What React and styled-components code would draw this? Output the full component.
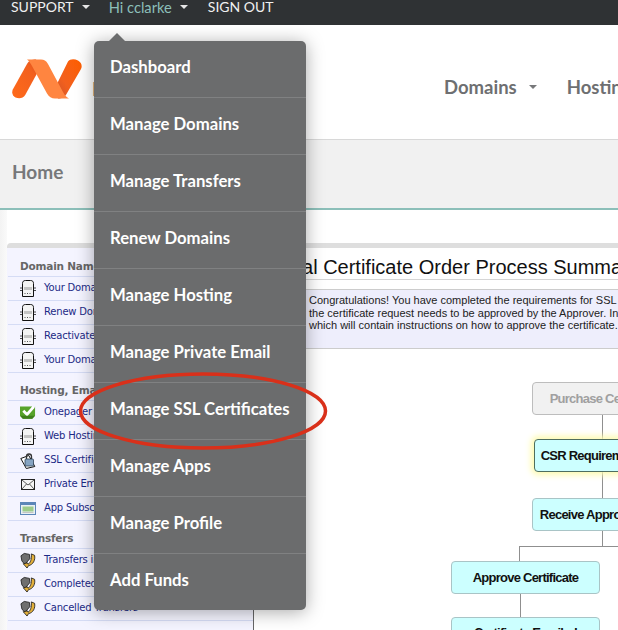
import React from 'react';
import styled, { createGlobalStyle } from 'styled-components';

const GlobalStyle = createGlobalStyle`
  html, body {
    margin: 0;
    padding: 0;
    background: #fff;
    overflow: hidden;
  }
`;

const menuItems = [
  'Dashboard',
  'Manage Domains',
  'Manage Transfers',
  'Renew Domains',
  'Manage Hosting',
  'Manage Private Email',
  'Manage SSL Certificates',
  'Manage Apps',
  'Manage Profile',
  'Add Funds',
];

const sideGroups = [
  {
    title: 'Domain Name Management',
    rows: [
      ['server', 'Your Domain Names'],
      ['server', 'Renew Domain Names'],
      ['server', 'Reactivate Domains'],
      ['server', 'Your Domain Alerts'],
    ],
  },
  {
    title: 'Hosting, Email & SSL',
    rows: [
      ['check', 'Onepager Sites'],
      ['server', 'Web Hosting List'],
      ['lock', 'SSL Certificates'],
      ['mail', 'Private Email'],
      ['app', 'App Subscriptions'],
    ],
  },
  {
    title: 'Transfers',
    rows: [
      ['transfer', 'Transfers in Progress'],
      ['transfer', 'Completed Transfers'],
      ['transfer', 'Cancelled Transfers'],
    ],
  },
];

const nodes = [
  { x: 278, y: 33, w: 146, h: 33, kind: 'muted', text: 'Purchase Certificate' },
  { x: 280, y: 90, w: 142, h: 33, kind: 'active', text: 'CSR Requirements Met' },
  { x: 278, y: 149, w: 146, h: 33, kind: 'normal', text: 'Receive Approval Email' },
  { x: 197, y: 212, w: 149, h: 33, kind: 'normal', text: 'Approve Certificate' },
  { x: 197, y: 268, w: 149, h: 30, kind: 'normal', text: 'Certificate Emailed' },
];

const lines = [
  { x: 348, y: 66, w: 1, h: 24 },
  { x: 348, y: 123, w: 1, h: 26 },
  { x: 348, y: 182, w: 1, h: 16 },
  { x: 265, y: 197, w: 120, h: 1 },
  { x: 265, y: 197, w: 1, h: 15 },
  { x: 266, y: 245, w: 1, h: 24 },
];

const ServerIcon = () => (
  <svg width="16" height="17" viewBox="0 0 16 17">
    <path d="M0 8h2M14 8h2M0 10.500h2M14 10.500h2" stroke="#222" strokeWidth="0.8" />
    <path d="M2.500 3.500c0-2 1-3 3-3h5c2 0 3 1 3 3v13h-11z" fill="#f4f4f4" stroke="#111" strokeWidth="1" />
    <rect x="4" y="7" width="8" height="3" fill="#c4c4c4" />
    <path d="M4.500 13.500h1M7 13.500h1M9.500 13.500h1" stroke="#555" strokeWidth="1" />
  </svg>
);

const CheckIcon = () => (
  <svg width="17" height="16" viewBox="0 0 17 16">
    <path d="M0 1h13l-1 2 3 0 1-2v10l-3 3H3l-3-3z" fill="#57a32a" />
    <path d="M3.500 5.500l4 4 7-8" fill="none" stroke="#fff" strokeWidth="3" />
    <path d="M0 11l3 3h10l3-3z" fill="#3f7f1c" />
  </svg>
);

const LockIcon = () => (
  <svg width="16" height="16" viewBox="0 0 16 16">
    <path d="M0.800 5.500l8-3 6 11-8.500 2z" fill="#fff" stroke="#111" strokeWidth="1" />
    <path d="M6.500 6V3.500a2.500 2.500 0 0 1 5 0V6" fill="none" stroke="#333" strokeWidth="1.300" />
    <rect x="5" y="6" width="8.500" height="7" rx="1" fill="#86a4c2" stroke="#2e4257" strokeWidth="0.8" />
  </svg>
);

const MailIcon = () => (
  <svg width="14" height="11" viewBox="0 0 14 11">
    <rect x="0.500" y="0.500" width="13" height="10" fill="#f5f5f5" stroke="#222" />
    <path d="M1 1l6 5 6-5M1 10l4.500-5M13 10L8.500 5" fill="none" stroke="#333" strokeWidth="0.8" />
  </svg>
);

const AppIcon = () => (
  <svg width="16" height="13" viewBox="0 0 16 13">
    <rect x="0.500" y="0.500" width="15" height="12" fill="#e8f0f4" stroke="#5b86b8" />
    <rect x="1" y="1" width="14" height="2" fill="#5b86b8" />
    <rect x="2.500" y="4.500" width="11" height="5" fill="#9ccb8a" />
    <rect x="2.500" y="10" width="11" height="1" fill="#c4c4c4" />
  </svg>
);

const TransferIcon = () => (
  <svg width="17" height="17" viewBox="0 0 17 17">
    <path d="M1 3.500L4.500 1l5.500 1 .5 4.500L7.500 10 5 12.500 2 9z" fill="#6f6f6f" stroke="#1c1c1c" strokeWidth="0.9" />
    <path d="M12 1.500l3.500 1.500c1 5-1.500 10-6.500 11l-1.500 2.500L3.500 12l4.500-1 .5 1.500c2.500-1.500 4-5 3.500-11z" fill="#e3b03a" stroke="#1c1c1c" strokeWidth="0.9" />
  </svg>
);

const sideIcons = {
  server: ServerIcon,
  check: CheckIcon,
  lock: LockIcon,
  mail: MailIcon,
  app: AppIcon,
  transfer: TransferIcon,
};

const Logo = () => (
  <LogoMark width="70" height="40" viewBox="0 0 70 40">
    <defs>
      <linearGradient id="logoLeft" x1="0" y1="1" x2="1" y2="0">
        <stop offset="0" stopColor="#ff6a1a" />
        <stop offset="0.7" stopColor="#f2601e" />
        <stop offset="1" stopColor="#cf4a22" />
      </linearGradient>
      <linearGradient id="logoRight" x1="1" y1="0" x2="0" y2="1">
        <stop offset="0" stopColor="#ff5f00" />
        <stop offset="0.6" stopColor="#f2601e" />
        <stop offset="1" stopColor="#c9502a" />
      </linearGradient>
    </defs>
    <path d="M0.800 30.500 L15 5 C17 1.500 20 0.500 24 0.500 L28 9 L13.200 36 C11 39.500 7 39.800 3.500 38.500 C0.500 37 -0.500 33.500 0.800 30.500z" fill="url(#logoLeft)" />
    <path d="M56 2.500 C58 0 62 -0.500 66 1.500 C69.500 3.500 70.500 7 69 10 L54.500 35 C52.500 38.500 50 39.500 46 39.500 L42 31z" fill="url(#logoRight)" />
    <path d="M15 0.500 H29 C32 0.500 34 1.500 36 5 L51 33 C52.500 36 54 38 57 39.500 H43 C39.500 39.500 37 38 35 34.500 L20 7 C18.800 4.500 17 2 15 0.500z" fill="#ff8540" />
  </LogoMark>
);

const Caret = styled.i`
  display: block;
  flex-shrink: 0;
  width: 0;
  height: 0;
  margin-top: ${(p) => p.$offset || 0}px;
  border-left: 4px solid transparent;
  border-right: 4px solid transparent;
  border-top: 4px solid ${(p) => p.$color};
`;

export default function App() {
  return (
    <Page>
      <GlobalStyle />
      <TopBar>
        <TopLink>SUPPORT</TopLink>
        <Caret $color="#e6e6e6" />
        <TopLink $accent $gapLeft={11}>Hi cclarke</TopLink>
        <Caret $color="#e6e6e6" />
        <TopLink $gapLeft={12}>SIGN OUT</TopLink>
      </TopBar>

      <Header>
        <Logo />
        <BrandName>namecheap</BrandName>
        <NavLink>Domains</NavLink>
        <Caret $color="#77787a" $offset={16} />
        <NavLink $gapLeft={30}>Hosting</NavLink>
      </Header>

      <HomeBar>Home</HomeBar>

      <Content>
        <Panel>
          <Sidebar>
            {sideGroups.map((group) => (
              <div key={group.title}>
                <SideHeading>{group.title}</SideHeading>
                {group.rows.map(([icon, label]) => {
                  const Icon = sideIcons[icon];
                  return (
                    <SideRow key={label}>
                      <IconSlot><Icon /></IconSlot>
                      <SideLink>{label}</SideLink>
                    </SideRow>
                  );
                })}
              </div>
            ))}
          </Sidebar>
          <Main>
            <Title>Digital Certificate Order Process Summary</Title>
            <Notice>
              <div>Congratulations! You have completed the requirements for SSL certificate activation. Now</div>
              <div>the certificate request needs to be approved by the Approver. In a few minutes an email will arrive</div>
              <div>which will contain instructions on how to approve the certificate.</div>
            </Notice>
            <Diagram>
              {lines.map((l) => (
                <Connector key={`${l.x}-${l.y}-${l.w}`} $x={l.x} $y={l.y} $w={l.w} $h={l.h} />
              ))}
              {nodes.map((n) => (
                <Node key={n.text} $x={n.x} $y={n.y} $w={n.w} $h={n.h} $kind={n.kind}>
                  <NodeLabel>{n.text}</NodeLabel>
                </Node>
              ))}
            </Diagram>
          </Main>
        </Panel>
      </Content>

      <Menu>
        {menuItems.map((item) => (
          <MenuItem key={item}>{item}</MenuItem>
        ))}
      </Menu>

      <Ring width="260" height="90" viewBox="0 0 260 90">
        <ellipse cx="130" cy="45" rx="122.500" ry="37" fill="none" stroke="#d9301a" strokeWidth="3.500" />
      </Ring>
    </Page>
  );
}

const Page = styled.div`
  position: relative;
  width: 618px;
  height: 630px;
  overflow: hidden;
  background: #fff;
  font-family: Lato, 'Open Sans', sans-serif;
`;

const TopBar = styled.div`
  display: flex;
  align-items: center;
  height: 25px;
  padding: 0 0 11px 11px;
  box-sizing: border-box;
  gap: 8px;
  background: #2f3234;
`;

const TopLink = styled.span`
  margin-left: ${(p) => p.$gapLeft || 0}px;
  font-size: ${(p) => (p.$accent ? '14.700px' : '14px')};
  line-height: 14px;
  color: ${(p) => (p.$accent ? '#8cbfb9' : '#f0f0f0')};
`;

const Header = styled.div`
  display: flex;
  align-items: center;
  height: 115px;
  box-sizing: border-box;
  padding: 0 0 6px 12px;
  border-bottom: 1px solid #d8d8d8;
  white-space: nowrap;
`;

const LogoMark = styled.svg`
  flex-shrink: 0;
`;

const BrandName = styled.div`
  width: 352px;
  flex-shrink: 0;
  margin: 14px 0 0 10px;
  font-size: 26px;
  font-weight: 700;
  color: #58595b;
`;

const NavLink = styled.span`
  flex-shrink: 0;
  margin: 16px 12px 0 ${(p) => p.$gapLeft || 0}px;
  font-size: 18.500px;
  font-weight: 700;
  color: #6e6f71;
`;

const HomeBar = styled.div`
  height: 70px;
  box-sizing: border-box;
  padding: 20px 0 0 12px;
  border-bottom: 2px solid #8cbfb9;
  background: #f1f1f1;
  font-size: 19px;
  line-height: 24px;
  font-weight: 700;
  color: #77787a;
`;

const Content = styled.div`
  padding: 33px 0 0 7px;
  background: linear-gradient(to right, #f3f3f3, #fafafa 7px, #fff 7px);
`;

const Panel = styled.div`
  display: flex;
  width: 900px;
  height: 500px;
  border-top: 5px solid #dedede;
  border-radius: 4px 0 0 0;
`;

const Sidebar = styled.div`
  width: 247px;
  flex-shrink: 0;
  box-sizing: border-box;
  padding: 1px 0 0 1px;
  background: #f4f4ff;
  border-right: 1px solid #666;
`;

const SideHeading = styled.div`
  display: flex;
  align-items: center;
  height: 28px;
  box-sizing: border-box;
  padding: 6px 0 0 12px;
  border-bottom: 1px solid #d5dcf5;
  font-family: 'DejaVu Sans', sans-serif;
  font-size: 10.500px;
  font-weight: 700;
  letter-spacing: -0.200px;
  white-space: nowrap;
  color: #666;
`;

const SideRow = styled.div`
  display: flex;
  align-items: center;
  height: 24px;
  box-sizing: border-box;
  border-bottom: 1px solid #d5dcf5;
`;

const IconSlot = styled.span`
  display: flex;
  justify-content: center;
  width: 16px;
  margin-left: 12px;
`;

const SideLink = styled.span`
  margin: 0 0 2px 8px;
  font-family: 'DejaVu Sans', sans-serif;
  font-size: 10px;
  letter-spacing: -0.200px;
  color: #1c2a86;
`;

const Main = styled.div`
  flex: 1;
  min-width: 0;
  padding-left: 8px;
  font-family: 'Liberation Sans', Arial, sans-serif;
`;

const Title = styled.div`
  height: 32px;
  box-sizing: border-box;
  padding-top: 8px;
  border-bottom: 1px solid #d5d5d5;
  font-size: 20px;
  line-height: 23px;
  color: #111;
  white-space: nowrap;
`;

const Notice = styled.div`
  height: 60px;
  margin-top: 9px;
  box-sizing: border-box;
  padding: 4px 0 0 47px;
  border-top: 1px solid #ccc;
  border-bottom: 1px solid #ccc;
  background: #eeeefc;
  font-size: 11px;
  line-height: 12.500px;
  color: #222;
  white-space: nowrap;
`;

const Diagram = styled.div`
  position: relative;
  margin-left: -8px;
  height: 300px;
`;

const Connector = styled.div`
  position: absolute;
  left: ${(p) => p.$x}px;
  top: ${(p) => p.$y}px;
  width: ${(p) => p.$w}px;
  height: ${(p) => p.$h}px;
  background: #8f8f8f;
`;

const Node = styled.div`
  position: absolute;
  left: ${(p) => p.$x}px;
  top: ${(p) => p.$y}px;
  width: ${(p) => p.$w}px;
  height: ${(p) => p.$h}px;
  display: flex;
  align-items: center;
  justify-content: center;
  box-sizing: border-box;
  border-radius: 4px;
  border: 1px solid ${(p) => (p.$kind === 'active' ? '#4e6e5e' : p.$kind === 'muted' ? '#bdbdbd' : '#a9c4c6')};
  background: ${(p) => (p.$kind === 'muted' ? '#f1f1f1' : '#ccffff')};
  color: ${(p) => (p.$kind === 'muted' ? '#a0a0a0' : '#111')};
  box-shadow: ${(p) => (p.$kind === 'active' ? '0 0 6px 3px #fdfbb0' : 'none')};
`;

const NodeLabel = styled.span`
  font-size: 13px;
  font-weight: 700;
  letter-spacing: -0.750px;
  white-space: nowrap;
`;

const Menu = styled.div`
  position: absolute;
  left: 94px;
  top: 41px;
  width: 212px;
  border-radius: 5px;
  background: #6b6c6d;
  box-shadow: 0 2px 18px rgba(0, 0, 0, 0.34);

  &::before {
    content: '';
    position: absolute;
    left: 15px;
    top: -8px;
    border-left: 8px solid transparent;
    border-right: 8px solid transparent;
    border-bottom: 8px solid #6b6c6d;
  }
`;

const MenuItem = styled.div`
  height: 57px;
  box-sizing: border-box;
  padding: 16px 0 0 16px;
  border-bottom: 1px solid #808182;
  font-size: 16.700px;
  line-height: 20px;
  font-weight: 700;
  color: #fff;
  white-space: nowrap;

  &:last-child {
    height: 56px;
    border-bottom: 0;
  }
`;

const Ring = styled.svg`
  position: absolute;
  left: 73px;
  top: 366px;
  pointer-events: none;
`;
